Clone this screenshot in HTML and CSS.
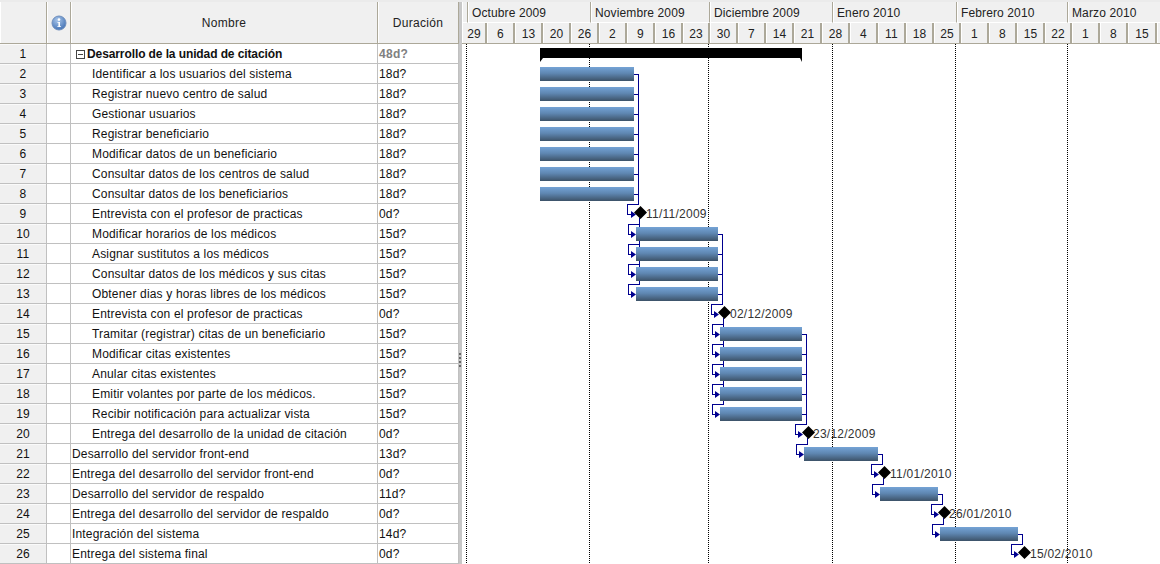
FILE: index.html
```html
<!DOCTYPE html>
<html lang="es">
<head>
<meta charset="utf-8">
<title>Desarrollo de la unidad de citación</title>
<link rel="stylesheet" href="styles.css">
</head>
<body>
<div class="app">
  <div class="table">
    <div class="row head">
      <div class="id"></div>
      <div class="info"><svg class="info-icon" width="16" height="16" viewBox="0 0 16 16"><defs><radialGradient id="ig" cx="40%" cy="30%" r="75%"><stop offset="0" stop-color="#a9c6ea"/><stop offset="1" stop-color="#3f6fb3"/></radialGradient></defs><circle cx="8" cy="8" r="7" fill="url(#ig)" stroke="#6f8fbd"/><circle cx="8" cy="4.6" r="1.3" fill="#fff"/><path d="M6.4 7H9v4.2h1V12H6.3v-.8h1.1V7.8h-1z" fill="#fff"/></svg></div>
      <div class="name">Nombre</div>
      <div class="dur">Duración</div>
    </div>
    <div class="row bold"><div class="id">1</div><div class="info"></div><div class="name summary"><span class="toggle"></span>Desarrollo de la unidad de citación</div><div class="dur muted">48d?</div></div>
    <div class="row"><div class="id">2</div><div class="info"></div><div class="name ind">Identificar a los usuarios del sistema</div><div class="dur">18d?</div></div>
    <div class="row"><div class="id">3</div><div class="info"></div><div class="name ind">Registrar nuevo centro de salud</div><div class="dur">18d?</div></div>
    <div class="row"><div class="id">4</div><div class="info"></div><div class="name ind">Gestionar usuarios</div><div class="dur">18d?</div></div>
    <div class="row"><div class="id">5</div><div class="info"></div><div class="name ind">Registrar beneficiario</div><div class="dur">18d?</div></div>
    <div class="row"><div class="id">6</div><div class="info"></div><div class="name ind">Modificar datos de un beneficiario</div><div class="dur">18d?</div></div>
    <div class="row"><div class="id">7</div><div class="info"></div><div class="name ind">Consultar datos de los centros de salud</div><div class="dur">18d?</div></div>
    <div class="row"><div class="id">8</div><div class="info"></div><div class="name ind">Consultar datos de los beneficiarios</div><div class="dur">18d?</div></div>
    <div class="row"><div class="id">9</div><div class="info"></div><div class="name ind">Entrevista con el profesor de practicas</div><div class="dur">0d?</div></div>
    <div class="row"><div class="id">10</div><div class="info"></div><div class="name ind">Modificar horarios de los médicos</div><div class="dur">15d?</div></div>
    <div class="row"><div class="id">11</div><div class="info"></div><div class="name ind">Asignar sustitutos a los médicos</div><div class="dur">15d?</div></div>
    <div class="row"><div class="id">12</div><div class="info"></div><div class="name ind">Consultar datos de los médicos y sus citas</div><div class="dur">15d?</div></div>
    <div class="row"><div class="id">13</div><div class="info"></div><div class="name ind">Obtener dias y horas libres de los médicos</div><div class="dur">15d?</div></div>
    <div class="row"><div class="id">14</div><div class="info"></div><div class="name ind">Entrevista con el profesor de practicas</div><div class="dur">0d?</div></div>
    <div class="row"><div class="id">15</div><div class="info"></div><div class="name ind">Tramitar (registrar) citas de un beneficiario</div><div class="dur">15d?</div></div>
    <div class="row"><div class="id">16</div><div class="info"></div><div class="name ind">Modificar citas existentes</div><div class="dur">15d?</div></div>
    <div class="row"><div class="id">17</div><div class="info"></div><div class="name ind">Anular citas existentes</div><div class="dur">15d?</div></div>
    <div class="row"><div class="id">18</div><div class="info"></div><div class="name ind">Emitir volantes por parte de los médicos.</div><div class="dur">15d?</div></div>
    <div class="row"><div class="id">19</div><div class="info"></div><div class="name ind">Recibir notificación para actualizar vista</div><div class="dur">15d?</div></div>
    <div class="row"><div class="id">20</div><div class="info"></div><div class="name ind">Entrega del desarrollo de la unidad de citación</div><div class="dur">0d?</div></div>
    <div class="row"><div class="id">21</div><div class="info"></div><div class="name">Desarrollo del servidor front-end</div><div class="dur">13d?</div></div>
    <div class="row"><div class="id">22</div><div class="info"></div><div class="name">Entrega del desarrollo del servidor front-end</div><div class="dur">0d?</div></div>
    <div class="row"><div class="id">23</div><div class="info"></div><div class="name">Desarrollo del servidor de respaldo</div><div class="dur">11d?</div></div>
    <div class="row"><div class="id">24</div><div class="info"></div><div class="name">Entrega del desarrollo del servidor de respaldo</div><div class="dur">0d?</div></div>
    <div class="row"><div class="id">25</div><div class="info"></div><div class="name">Integración del sistema</div><div class="dur">14d?</div></div>
    <div class="row"><div class="id">26</div><div class="info"></div><div class="name">Entrega del sistema final</div><div class="dur">0d?</div></div>
  </div>
  <div class="splitter"><div class="grip"></div></div>
  <div class="gantt">
    <div class="months">
      <div class="month m-lead"></div>
      <div class="month m-oct">Octubre 2009</div>
      <div class="month m-nov">Noviembre 2009</div>
      <div class="month m-dec">Diciembre 2009</div>
      <div class="month m-ene">Enero 2010</div>
      <div class="month m-feb">Febrero 2010</div>
      <div class="month m-rest">Marzo 2010</div>
    </div>
    <div class="weeks">
      <div class="week lead">29</div><div class="week">6</div><div class="week">13</div><div class="week">20</div><div class="week">26</div><div class="week">2</div><div class="week">9</div><div class="week">16</div><div class="week short">23</div><div class="week">30</div><div class="week">7</div><div class="week">14</div><div class="week">21</div><div class="week">28</div><div class="week">4</div><div class="week">11</div><div class="week">18</div><div class="week short">25</div><div class="week">1</div><div class="week">8</div><div class="week">15</div><div class="week short">22</div><div class="week">1</div><div class="week">8</div><div class="week long">15</div><div class="week rest"></div>
    </div>
    <svg class="chart" width="698" height="520" viewBox="462 44 698 520">
      <defs>
        <linearGradient id="barfill" x1="0" y1="0" x2="0" y2="1">
          <stop offset="0" stop-color="#75a3d6"/>
          <stop offset="0.45" stop-color="#5f87b2"/>
          <stop offset="1" stop-color="#3c5268"/>
        </linearGradient>
      </defs>
      <path class="dots" d="M466.5 44V564M589.5 44V564M708.5 44V564M832.5 44V564M955.5 44V564M1067.5 44V564"/>
      <path class="link" d="M634 74.5H638.5V204.5H627.5V214.5H632M634 94.5H638.5M634 114.5H638.5M634 134.5H638.5M634 154.5H638.5M634 174.5H638.5M634 194.5H638.5"/>
      <path class="link" d="M639.5 218V284.5H628.5V294.5H632M639.5 224.5H628.5V234.5H632M639.5 244.5H628.5V254.5H632M639.5 264.5H628.5V274.5H632"/>
      <path class="link" d="M718 234.5H722.5V304.5H711.5V314.5H716M718 254.5H722.5M718 274.5H722.5M718 294.5H722.5"/>
      <path class="link" d="M723.5 318V404.5H712.5V414.5H716M723.5 324.5H712.5V334.5H716M723.5 344.5H712.5V354.5H716M723.5 364.5H712.5V374.5H716M723.5 384.5H712.5V394.5H716"/>
      <path class="link" d="M802 334.5H806.5V424.5H795.5V434.5H799M802 354.5H806.5M802 374.5H806.5M802 394.5H806.5M802 414.5H806.5"/>
      <path class="link" d="M807.5 438V444.5H796.5V454.5H800"/>
      <path class="link" d="M878 454.5H882.5V464.5H871.5V474.5H875"/>
      <path class="link" d="M883.5 478V484.5H872.5V494.5H876"/>
      <path class="link" d="M938 494.5H942.5V504.5H931.5V514.5H935"/>
      <path class="link" d="M943.5 518V524.5H932.5V534.5H936"/>
      <path class="link" d="M1018 534.5H1022.5V544.5H1011.5V554.5H1015"/>
      <path class="head-arrow" d="M631 211l5 3.5-5 3.5zM631 231l5 3.5-5 3.5zM631 251l5 3.5-5 3.5zM631 271l5 3.5-5 3.5zM631 291l5 3.5-5 3.5zM714 311l5 3.5-5 3.5zM715 331l5 3.5-5 3.5zM715 351l5 3.5-5 3.5zM715 371l5 3.5-5 3.5zM715 391l5 3.5-5 3.5zM715 411l5 3.5-5 3.5zM798 431l5 3.5-5 3.5zM799 451l5 3.5-5 3.5zM874 471l5 3.5-5 3.5zM875 491l5 3.5-5 3.5zM934 511l5 3.5-5 3.5zM935 531l5 3.5-5 3.5zM1014 551l5 3.5-5 3.5z"/>
      <path class="summary-bar" d="M540 48H802V62L800 58H543L540 62z"/>
      <rect class="task" x="540" y="67" width="94" height="14"/>
      <rect class="task" x="540" y="87" width="94" height="14"/>
      <rect class="task" x="540" y="107" width="94" height="14"/>
      <rect class="task" x="540" y="127" width="94" height="14"/>
      <rect class="task" x="540" y="147" width="94" height="14"/>
      <rect class="task" x="540" y="167" width="94" height="14"/>
      <rect class="task" x="540" y="187" width="94" height="14"/>
      <rect class="task" x="636" y="227" width="82" height="14"/>
      <rect class="task" x="636" y="247" width="82" height="14"/>
      <rect class="task" x="636" y="267" width="82" height="14"/>
      <rect class="task" x="636" y="287" width="82" height="14"/>
      <rect class="task" x="720" y="327" width="82" height="14"/>
      <rect class="task" x="720" y="347" width="82" height="14"/>
      <rect class="task" x="720" y="367" width="82" height="14"/>
      <rect class="task" x="720" y="387" width="82" height="14"/>
      <rect class="task" x="720" y="407" width="82" height="14"/>
      <rect class="task" x="804" y="447" width="74" height="14"/>
      <rect class="task" x="880" y="487" width="58" height="14"/>
      <rect class="task" x="940" y="527" width="78" height="14"/>
      <path class="mile" d="M640.5 206l6.5 6.5-6.5 6.5-6.5-6.5zM724.5 306l6.5 6.5-6.5 6.5-6.5-6.5zM808.5 426l6.5 6.5-6.5 6.5-6.5-6.5zM884.5 466l6.5 6.5-6.5 6.5-6.5-6.5zM944.5 506l6.5 6.5-6.5 6.5-6.5-6.5zM1024.5 546l6.5 6.5-6.5 6.5-6.5-6.5z"/>
      <text class="date" x="646" y="218">11/11/2009</text>
      <text class="date" x="730" y="318">02/12/2009</text>
      <text class="date" x="813" y="438">23/12/2009</text>
      <text class="date" x="890" y="478">11/01/2010</text>
      <text class="date" x="949" y="518">26/01/2010</text>
      <text class="date" x="1030" y="558">15/02/2010</text>
    </svg>
  </div>
</div>
</body>
</html>
```
FILE: styles.css
```css
* { box-sizing: border-box; }
html, body { margin: 0; padding: 0; }
body {
  width: 1160px;
  height: 564px;
  overflow: hidden;
  background: #fff;
  font-family: "Liberation Sans", Arial, sans-serif;
  font-size: 12px;
  color: #111;
}
.app {
  display: flex;
  height: 564px;
  padding-top: 2px;
  background: #ebebeb;
}
.table { width: 459px; flex: none; background: #fff; }
.row {
  display: grid;
  grid-template-columns: 47px 24px 307px 81px;
  height: 20px;
  border-bottom: 1px solid #c0c0c0;
  line-height: 21px;
  letter-spacing: 0.17px;
}
.row.head {
  height: 42px;
  line-height: 43px;
  background: #f0f0f0;
  border-bottom-color: #aca899;
  text-align: center;
  color: #222;
  letter-spacing: 0.3px;
}
.row > div { border-right: 1px solid #c0c0c0; white-space: nowrap; overflow: hidden; }
.row.head > div { border-right-color: #aca899; box-shadow: inset 1px 0 #fff; }
.id {
  background: #f0f0f0;
  text-align: center;
  box-shadow: inset 0 1px #fafafa;
}
.info { display: flex; align-items: center; justify-content: center; }
.info-icon { display: block; }
.name { padding-left: 1px; }
.name.ind { padding-left: 21px; }
.name.summary { display: flex; align-items: center; padding: 2px 0 0 5px; }
.row.head .name { padding-left: 0; }
.dur { padding-left: 1px; }
.row.head .dur { padding-left: 0; }
.bold { font-weight: bold; letter-spacing: -0.1px; }
.bold .id { font-weight: normal; letter-spacing: 0.17px; }
.muted { color: #808080; letter-spacing: 0.3px; }
.toggle {
  position: relative;
  flex: none;
  width: 9px;
  height: 9px;
  margin-right: 2px;
  border: 1px solid #444;
  background: #fff;
}
.toggle::after {
  content: "";
  position: absolute;
  left: 1px;
  right: 1px;
  top: 3px;
  height: 1px;
  background: #444;
}
.splitter { width: 3px; flex: none; background: #c8c8c8; }
.grip {
  width: 2px;
  height: 14px;
  margin: 351px 0 0 0;
  background: repeating-linear-gradient(to bottom, #666 0 2px, transparent 2px 4px);
}
.gantt { flex: 1; min-width: 0; background: #fff; }
.months, .weeks {
  display: flex;
  height: 21px;
  background: #f0f0f0;
  color: #222;
  letter-spacing: 0.12px;
  line-height: 22px;
}
.weeks { border-bottom: 1px solid #aca899; letter-spacing: 0.2px; }
.month {
  flex: none;
  padding-left: 3px;
  border-right: 1px solid #aca899;
  border-left: 1px solid #fff;
  border-bottom: 1px solid #fff;
  white-space: nowrap;
  overflow: hidden;
}
.m-lead { width: 6px; padding: 0; }
.m-oct { width: 123px; }
.m-nov { width: 119px; }
.m-dec { width: 123px; }
.m-ene { width: 124px; }
.m-feb { width: 111px; }
.m-rest { flex: 1; border-right: 0; }
.week {
  flex: none;
  width: 28px;
  text-align: center;
  border-right: 2px solid #aca899;
  border-left: 1px solid #fff;
}
.week.lead { width: 25px; }
.week.short { width: 27px; }
.week.long { width: 29px; }
.week.rest { flex: 1; width: auto; border-right: 0; }
.chart { display: block; }
.dots { fill: none; stroke: #000; stroke-width: 1; stroke-dasharray: 1 1; }
.link { fill: none; stroke: #00008f; stroke-width: 1; shape-rendering: crispEdges; }
.head-arrow { fill: #00008f; }
.summary-bar { fill: #000; }
.task { fill: url(#barfill); }
.mile { fill: #000; }
.date {
  font-family: "Liberation Sans", Arial, sans-serif;
  font-size: 12px;
  letter-spacing: 0.25px;
  fill: #333;
}
```
